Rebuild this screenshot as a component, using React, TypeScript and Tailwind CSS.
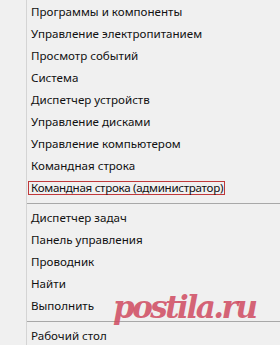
const groups: string[][] = [
  [
    "Программы и компоненты",
    "Управление электропитанием",
    "Просмотр событий",
    "Система",
    "Диспетчер устройств",
    "Управление дисками",
    "Управление компьютером",
    "Командная строка",
    "Командная строка (администратор)",
  ],
  ["Диспетчер задач", "Панель управления", "Проводник", "Найти", "Выполнить"],
  ["Рабочий стол"],
]

const highlighted = "Командная строка (администратор)"

export default function App() {
  return (
    <div className="relative w-[280px] h-[345px] overflow-hidden bg-[#f0f0f0] text-[11.6px] text-[#111] font-['Noto_Sans',sans-serif] flex">
      <div className="w-[27px] shrink-0 border-r border-[#d4d4d4]" />
      <div className="flex-1 pt-px">
        {groups.map((items, gi) => (
          <div key={gi}>
            {gi > 0 && (
              <div className="h-[8px] flex items-center">
                <div className="h-px w-full bg-[#a8a8a8]" />
              </div>
            )}
            {items.map((item) => (
              <div key={item} className="h-[22px] flex items-center pl-[1px]">
                {item === highlighted ? (
                  <span className="border border-[#c0393b] pl-[2px] pr-[1px] leading-[12px] h-[14px] tracking-[-0.3px]">{item}</span>
                ) : (
                  <span className="pl-[3px] leading-[14px]">{item}</span>
                )}
              </div>
            ))}
          </div>
        ))}
      </div>
      <div className="absolute left-[113px] top-[288px] text-[31px] leading-[38px] italic font-bold font-['DejaVu_Serif',serif] text-[#cf4a60]/85 tracking-[-2.5px]">
        postila.ru
      </div>
    </div>
  )
}
